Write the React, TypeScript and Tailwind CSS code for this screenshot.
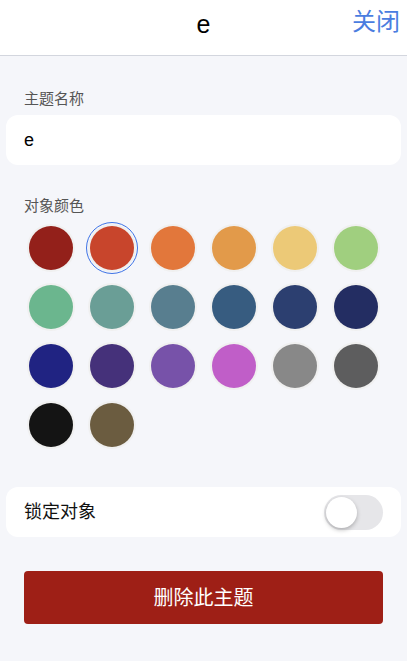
import { useState } from "react";

const colors = [
  "#93201a",
  "#c8452c",
  "#e2773b",
  "#e29a4a",
  "#ecc977",
  "#a0cf7f",
  "#6bb68e",
  "#6a9e96",
  "#587e8f",
  "#375c80",
  "#2c3f70",
  "#232d62",
  "#202382",
  "#45317a",
  "#7752a9",
  "#c05ec8",
  "#888888",
  "#5d5d5e",
  "#141414",
  "#6b5c40",
];

export default function App() {
  const [selected, setSelected] = useState(1);
  const [locked, setLocked] = useState(false);

  return (
    <div
      className="min-h-[661px] w-full bg-[#f5f6fa]"
      style={{ fontFamily: '"Liberation Sans", "Noto Sans CJK SC", sans-serif' }}
    >
      <div className="relative flex h-[56px] items-start justify-center border-b border-[#d3d6de] bg-white pt-[10px]">
        <div className="text-[25px] leading-[28px] text-black">e</div>
        <button className="absolute right-[7px] top-[10px] text-[24px] leading-[24px] text-[#4a7de0]">
          关闭
        </button>
      </div>

      <div className="pt-[33px]">
        <div className="px-6 text-[15px] leading-[20px] text-[#555]">主题名称</div>
        <div className="mx-[6px] mt-[6px] flex h-[50px] items-center rounded-xl bg-white px-[18px] text-[18px] text-black">
          e
        </div>

        <div className="mt-[31px] px-6 text-[15px] leading-[20px] text-[#555]">对象颜色</div>
        <div className="mt-[2px] grid grid-cols-6 px-5">
          {colors.map((c, i) => (
            <div key={c} className="flex h-[59px] items-center justify-center">
              <button
                onClick={() => setSelected(i)}
                className={`flex h-[52px] w-[52px] items-center justify-center rounded-full ${
                  selected === i ? "border border-[#3f74e6]" : ""
                }`}
              >
                <span className="flex h-[48px] w-[48px] items-center justify-center rounded-full bg-[#f0f0f0]">
                  <span className="h-[44px] w-[44px] rounded-full" style={{ backgroundColor: c }} />
                </span>
              </button>
            </div>
          ))}
        </div>

        <div className="mx-[6px] mt-[33px] flex h-[50px] items-center justify-between rounded-xl bg-white pl-[18px] pr-[18px]">
          <span className="text-[18px] text-[#111]">锁定对象</span>
          <button
            onClick={() => setLocked(!locked)}
            className={`flex h-[35px] w-[59px] items-center rounded-full p-[2px] ${
              locked ? "justify-end bg-[#34c759]" : "justify-start bg-[#e6e6e9]"
            }`}
          >
            <span className="h-[31px] w-[31px] rounded-full bg-white shadow-[0_2px_4px_rgba(0,0,0,0.25)]" />
          </button>
        </div>

        <div className="mt-[34px] px-6">
          <button className="flex h-[53px] w-full items-center justify-center rounded-[4px] bg-[#9e1f16] text-[20px] text-white">
            删除此主题
          </button>
        </div>
      </div>
    </div>
  );
}
